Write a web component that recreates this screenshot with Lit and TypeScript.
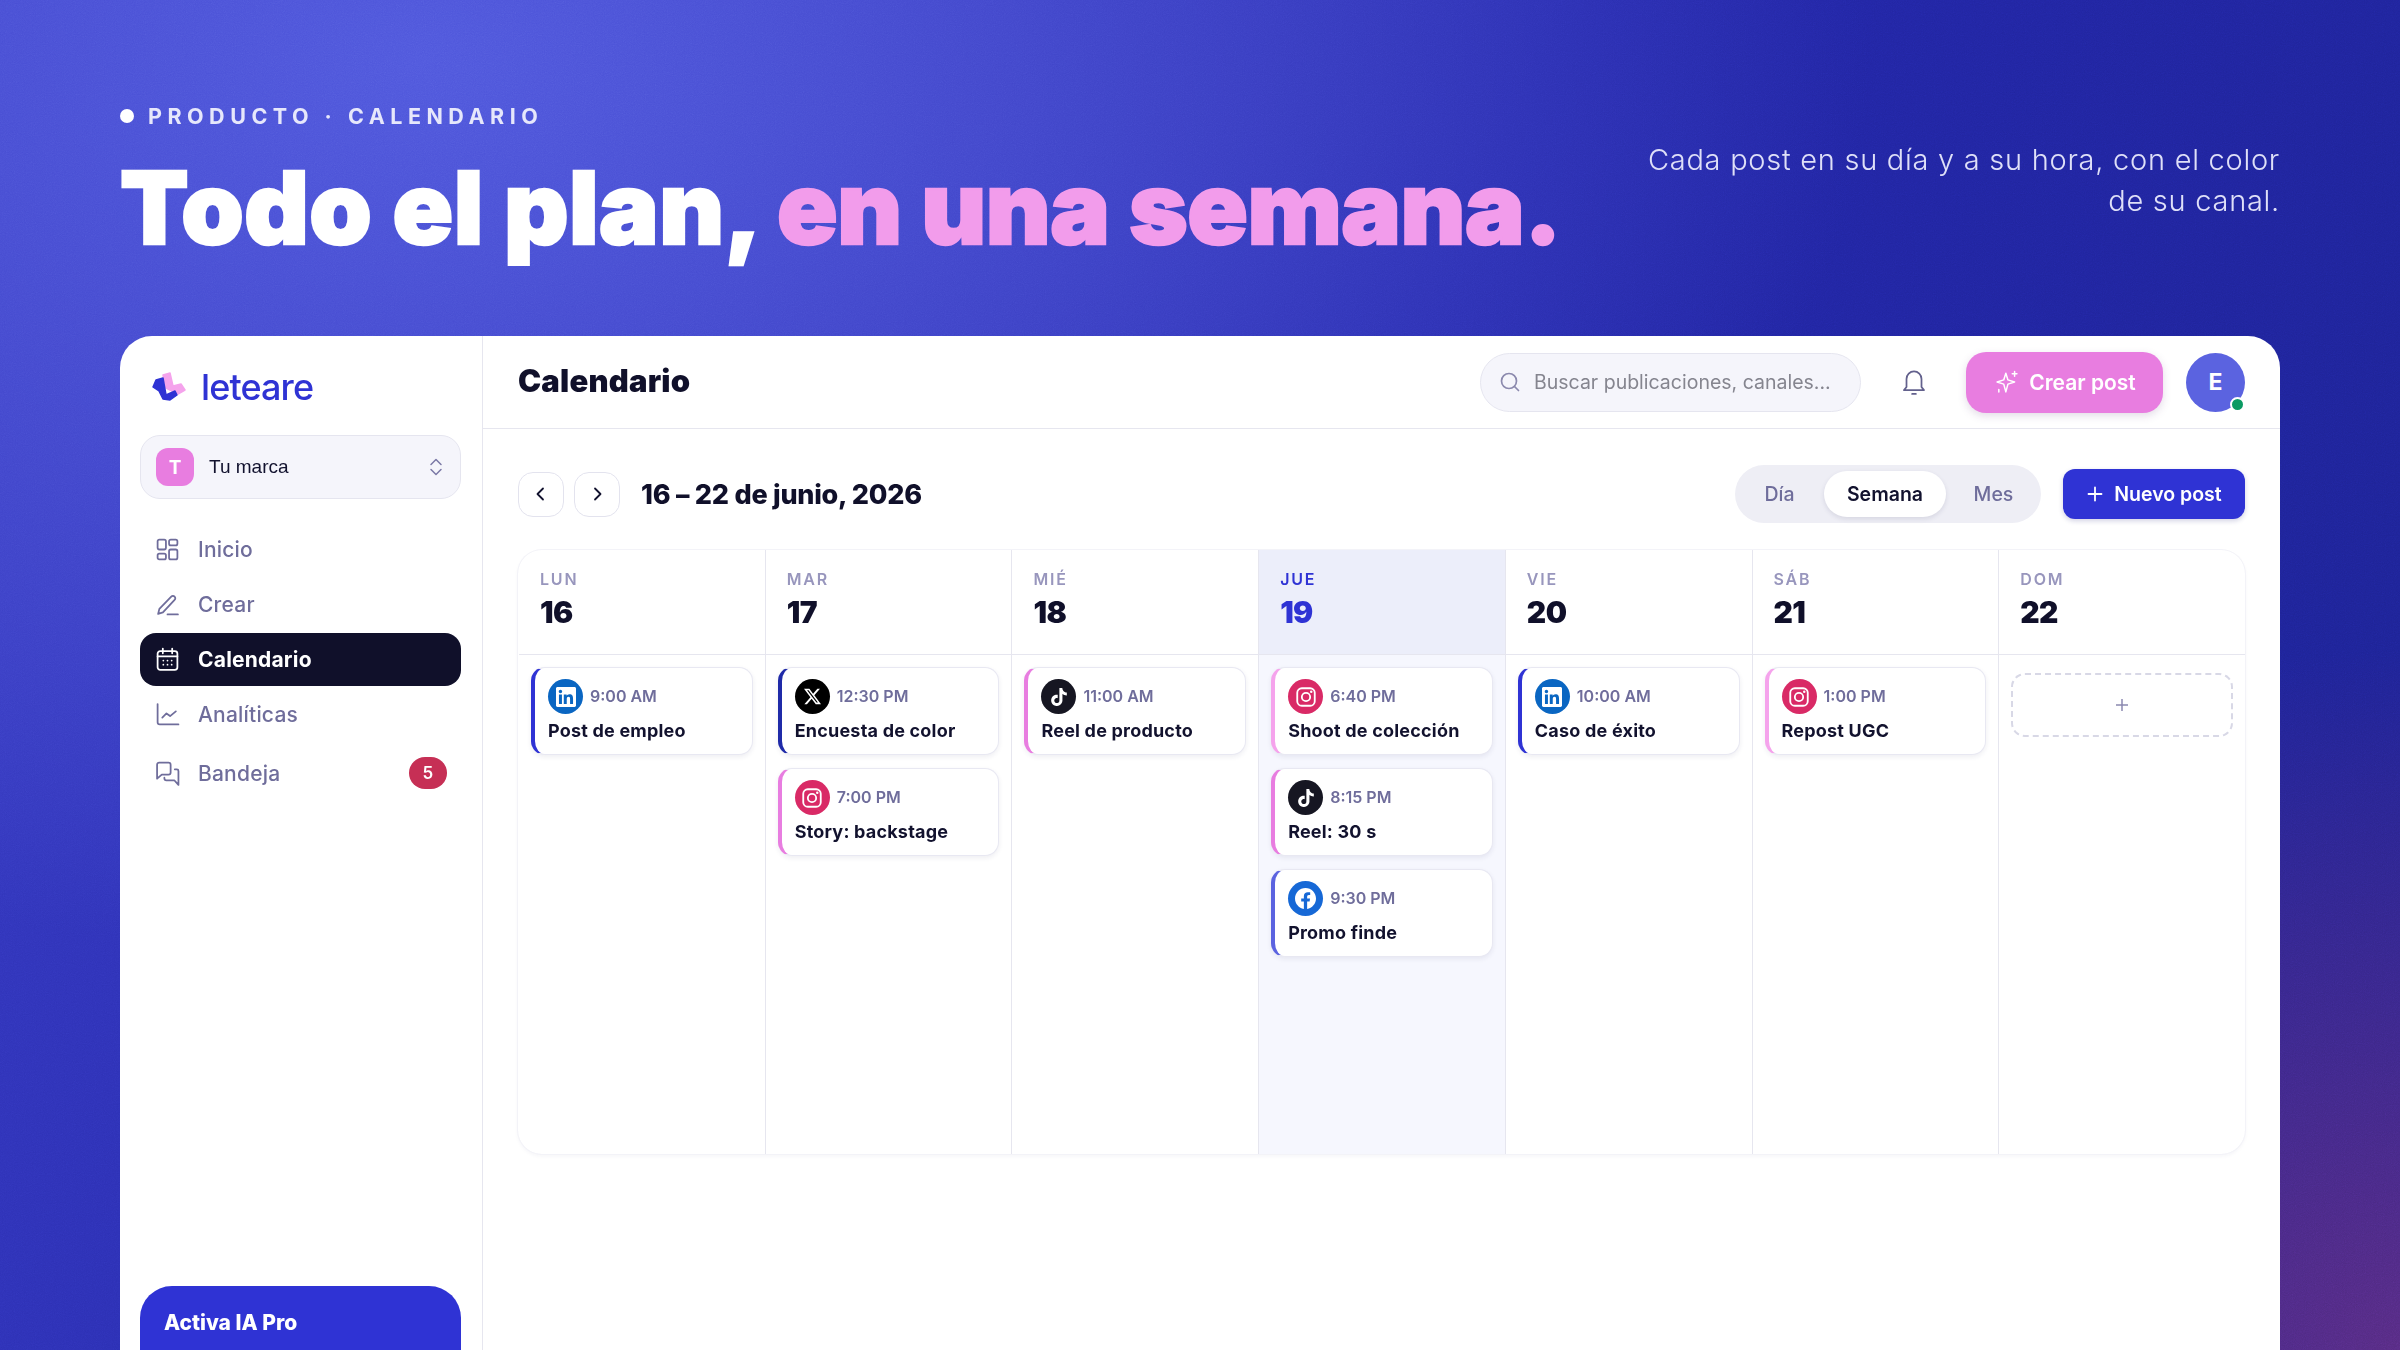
import { LitElement, html, css, svg } from "lit";
import { customElement } from "lit/decorators.js";

const icon = (body: unknown, size = 25) => html`<svg class="ic" width=${size} height=${size} viewBox="0 0 24 24" fill="none" stroke="currentColor" stroke-width="1.700" stroke-linecap="round" stroke-linejoin="round">${body}</svg>`;

const navIcons: Record<string, unknown> = {
  home: svg`<rect x="2.500" y="2.500" width="8" height="9.500" rx="1.600"/><rect x="13.500" y="2.500" width="8" height="5.500" rx="1.600"/><rect x="2.500" y="16" width="8" height="5.500" rx="1.600"/><rect x="13.500" y="12" width="8" height="9.500" rx="1.600"/>`,
  pen: svg`<path d="M3 21l1.200-4.800L15.600 4.400a2.200 2.200 0 0 1 3.200 0 2.200 2.200 0 0 1 0 3.200L7.600 19.600 3 21z"/><path d="M12 21.500h10"/>`,
  cal: svg`<rect x="2.500" y="4" width="19" height="18" rx="2.500"/><path d="M2.500 9h19M7.500 1.500v4.500M16.500 1.500v4.500"/><path d="M8 13h.01M12 13h.01M16 13h.01M8 17h.01M12 17h.01M16 17h.01"/>`,
  chart: svg`<path d="M2.500 2v17.500a2 2 0 0 0 2 2h18"/><path d="M7 15l4-4 3.500 2.500L20 9"/>`,
  chat: svg`<path d="M2 3.500A2 2 0 0 1 4 1.500h9a2 2 0 0 1 2 2V11a2 2 0 0 1-2 2H6.500L2 17V3.500z"/><path d="M19 8h2a1.500 1.500 0 0 1 1.500 1.500V23l-4-4.500H11a2 2 0 0 1-2-2V16"/>`,
};

type Net = "in" | "x" | "ig" | "tt" | "fb";
const netBg: Record<Net, string> = { in: "#0a66c2", x: "#000000", ig: "#d92a66", tt: "#161622", fb: "#1668d6" };

const netGlyph = (n: Net) => {
  if (n === "in") return svg`<path fill="#fff" d="M20.447 20.452h-3.554v-5.569c0-1.328-.027-3.037-1.852-3.037-1.853 0-2.136 1.445-2.136 2.939v5.667H9.351V9h3.414v1.561h.046c.477-.9 1.637-1.850 3.370-1.850 3.601 0 4.267 2.370 4.267 5.455v6.286zM5.337 7.433c-1.144 0-2.063-.926-2.063-2.065 0-1.138.92-2.063 2.063-2.063 1.140 0 2.064.925 2.064 2.063 0 1.139-.925 2.065-2.064 2.065zm1.782 13.019H3.555V9h3.564v11.452zM22.225 0H1.771C.792 0 0 .774 0 1.729v20.542C0 23.227.792 24 1.771 24h20.451C23.2 24 24 23.227 24 22.271V1.729C24 .774 23.2 0 22.222 0h.003z"/>`;
  if (n === "x") return svg`<path fill="#fff" d="M18.901 1.153h3.680l-8.040 9.190L24 22.846h-7.406l-5.800-7.584-6.638 7.584H.474l8.600-9.830L0 1.154h7.594l5.243 6.932ZM17.610 20.644h2.039L6.486 3.240H4.298Z"/>`;
  if (n === "tt") return svg`<path fill="#fff" d="M12.525.02c1.310-.02 2.610-.01 3.910-.02.08 1.530.63 3.090 1.750 4.170 1.120 1.110 2.700 1.620 4.240 1.790v4.030c-1.440-.05-2.890-.35-4.200-.97-.57-.26-1.100-.59-1.620-.93-.01 2.920.01 5.840-.02 8.750-.08 1.400-.54 2.790-1.350 3.940-1.310 1.920-3.580 3.170-5.910 3.210-1.430.08-2.860-.31-4.080-1.030-2.020-1.190-3.440-3.370-3.650-5.710-.02-.5-.03-1-.01-1.490.18-1.900 1.120-3.720 2.580-4.960 1.660-1.440 3.980-2.130 6.150-1.720.02 1.480-.04 2.960-.04 4.440-.99-.32-2.150-.23-3.020.37-.63.41-1.110 1.040-1.360 1.750-.21.51-.15 1.070-.14 1.610.24 1.640 1.820 3.020 3.500 2.870 1.120-.01 2.190-.66 2.770-1.610.19-.33.4-.67.41-1.060.1-1.790.06-3.570.07-5.360.01-4.030-.01-8.050.02-12.070z"/>`;
  if (n === "fb") return svg`<path fill="#fff" d="M24 12.073c0-6.627-5.373-12-12-12s-12 5.373-12 12c0 5.990 4.388 10.954 10.125 11.854v-8.385H7.078v-3.470h3.047V9.430c0-3.007 1.792-4.669 4.533-4.669 1.312 0 2.686.235 2.686.235v2.953H15.830c-1.491 0-1.956.925-1.956 1.874v2.250h3.328l-.532 3.470h-2.796v8.385C19.612 23.027 24 18.062 24 12.073z"/>`;
  return svg`<rect x="1.500" y="1.500" width="21" height="21" rx="5.500" fill="none" stroke="#fff" stroke-width="2.200"/><circle cx="12" cy="12" r="5" fill="none" stroke="#fff" stroke-width="2.200"/><circle cx="18.300" cy="5.700" r="1.500" fill="#fff"/>`;
};

const netSize: Record<Net, number> = { in: 20, x: 17, ig: 20, tt: 18, fb: 21 };

interface Post { net: Net; time: string; title: string; bar: string; }
interface Day { dow: string; num: number; today?: boolean; posts: Post[]; empty?: boolean; }

const BLUE = "#2f33d4", NAVY = "#1f2aa8", PINK = "#e87de0", PALE = "#f5a3ec", PERI = "#5b63e0";

const days: Day[] = [
  { dow: "LUN", num: 16, posts: [{ net: "in", time: "9:00 AM", title: "Post de empleo", bar: BLUE }] },
  { dow: "MAR", num: 17, posts: [
    { net: "x", time: "12:30 PM", title: "Encuesta de color", bar: NAVY },
    { net: "ig", time: "7:00 PM", title: "Story: backstage", bar: PINK },
  ] },
  { dow: "MIÉ", num: 18, posts: [{ net: "tt", time: "11:00 AM", title: "Reel de producto", bar: PINK }] },
  { dow: "JUE", num: 19, today: true, posts: [
    { net: "ig", time: "6:40 PM", title: "Shoot de colección", bar: PALE },
    { net: "tt", time: "8:15 PM", title: "Reel: 30 s", bar: PINK },
    { net: "fb", time: "9:30 PM", title: "Promo finde", bar: PERI },
  ] },
  { dow: "VIE", num: 20, posts: [{ net: "in", time: "10:00 AM", title: "Caso de éxito", bar: BLUE }] },
  { dow: "SÁB", num: 21, posts: [{ net: "ig", time: "1:00 PM", title: "Repost UGC", bar: PALE }] },
  { dow: "DOM", num: 22, posts: [], empty: true },
];

@customElement("app-root")
export class AppRoot extends LitElement {
  static styles = css`
    :host { display: block; width: 2400px; height: 1350px; overflow: hidden; position: relative; font-family: Inter, "Liberation Sans", sans-serif; color: #12122e;
      background:
        radial-gradient(850px 700px at 2400px 1350px, rgba(115,48,125,.68), rgba(115,48,125,0) 100%),
        radial-gradient(1450px 900px at 420px 60px, #5058dd 0%, rgba(76,82,214,.72) 40%, rgba(50,55,190,0) 100%),
        linear-gradient(120deg, #383cc4 0%, #2326a8 50%, #1c2290 100%);
    }
    .noise { position: absolute; inset: 0; width: 100%; height: 100%; opacity: .22; mix-blend-mode: overlay; pointer-events: none; }
    .page { position: relative; display: flex; flex-direction: column; padding: 0 120px; height: 1350px; box-sizing: border-box; }
    .hero { display: flex; justify-content: space-between; align-items: flex-start; height: 336px; flex: none; box-sizing: border-box; padding-top: 101px; }
    .eyebrow { display: flex; align-items: center; gap: 14px; color: #e6e7fb; font-size: 21.500px; font-weight: 700; letter-spacing: 5.500px; line-height: 30px; white-space: nowrap; }
    .eyebrow i { width: 14px; height: 14px; border-radius: 50%; background: #fff; }
    h1 { margin: 22px 0 0; font-size: 100px; line-height: 110px; font-weight: 900; letter-spacing: .45px; color: #fff; white-space: nowrap; -webkit-text-stroke: 2.500px currentColor; }
    h1 span { color: #f29ceb; letter-spacing: -.45px; }
    .lede { margin: 38px 0 0; width: 640px; text-align: right; color: #dfe0f8; font-size: 29px; line-height: 41px; font-weight: 300; letter-spacing: .73px; flex: none; }
    .app { flex: 1; display: flex; background: #fff; border-radius: 32px 32px 0 0; overflow: hidden; min-height: 0; }
    .side { width: 363px; flex: none; box-sizing: border-box; border-right: 1px solid #e6e6ef; padding: 0 21px 0 20px; display: flex; flex-direction: column; }
    .logo { display: flex; align-items: center; gap: 15px; height: 99px; box-sizing: border-box; padding: 2px 0 0 12px; font-size: 36px; font-weight: 500; color: #2f33d4; letter-spacing: -.9px; }
    .logo svg { flex: none; }
    .brand { height: 64px; flex: none; box-sizing: border-box; display: flex; align-items: center; padding: 0 17px 0 15px; background: #f5f5fb; border: 1px solid #e5e5ef; border-radius: 20px; font-family: "Liberation Sans", sans-serif; font-size: 19px; }
    .brand b { width: 38px; height: 38px; border-radius: 12px; background: #e87de0; color: #fff; display: grid; place-items: center; font: 700 19px Inter, sans-serif; margin-right: 15px; }
    .brand span { flex: 1; }
    .brand svg { color: #7b79a6; }
    nav { display: flex; flex-direction: column; gap: 2px; margin-top: 24px; }
    .item { display: flex; align-items: center; gap: 18px; height: 53px; padding: 0 14px 0 15px; border-radius: 16px; color: #6f6d9b; font-size: 21px; font-weight: 500; letter-spacing: .2px; }
    .item.on { background: #10102a; color: #fff; font-weight: 700; }
    .item.tall { height: 60px; }
    .item em { margin-left: auto; width: 38px; height: 32px; border-radius: 16px; background: #c62f55; color: #fff; font-style: normal; font-size: 17px; font-weight: 600; display: grid; place-items: center; }
    .promo { margin-top: auto; height: 64px; flex: none; background: #2f33d4; border-radius: 32px 32px 0 0; color: #fff; box-sizing: border-box; padding: 23px 24px 0; overflow: hidden; }
    .promo h4 { margin: 0; font-size: 21px; line-height: 28px; font-weight: 800; }
    .promo p { margin: 12px 0 0; font-size: 16px; line-height: 22px; color: #d9dbfa; white-space: nowrap; }
    .main { flex: 1; min-width: 0; display: flex; flex-direction: column; }
    .top { height: 93px; flex: none; box-sizing: border-box; border-bottom: 1px solid #e6e6ef; display: flex; align-items: center; padding: 0 35px; }
    .top h2 { margin: -3px 0 0; font-size: 31px; font-weight: 900; letter-spacing: .2px; flex: 1; color: #10102a; }
    .search { width: 381px; height: 59px; box-sizing: border-box; border: 1px solid #e5e5ef; background: #f5f5fb; border-radius: 30px; display: flex; align-items: center; gap: 13px; padding: 0 18px; color: #8b89ad; font-size: 19.500px; }
    .search span { color: #85858f; white-space: nowrap; font-weight: 400; }
    .bell { margin: 0 37px 0 38px; color: #63618d; display: flex; }
    .create { width: 197px; height: 61px; border-radius: 20px; background: #e87de0; color: #fff; font-size: 21px; font-weight: 600; display: flex; align-items: center; justify-content: center; gap: 8px; box-shadow: 0 3px 8px rgba(100,60,120,.18); }
    .avatar { margin-left: 23px; width: 59px; height: 59px; border-radius: 50%; background: #5b63e0; color: #fff; font-weight: 700; font-size: 23px; display: grid; place-items: center; position: relative; }
    .avatar u { position: absolute; right: 0; bottom: 0; width: 11px; height: 11px; border-radius: 50%; background: #0b9a63; border: 2px solid #fff; }
    .content { padding: 0 35px; flex: 1; }
    .bar { height: 121px; display: flex; align-items: center; box-sizing: border-box; padding-top: 9px; }
    .arrow { width: 46px; height: 45px; box-sizing: border-box; border: 1px solid #e3e3ee; border-radius: 15px; display: grid; place-items: center; margin-right: 10px; color: #12122e; }
    .date { font-size: 27px; font-weight: 800; letter-spacing: -.25px; margin-left: 11px; flex: 1; color: #10102a; }
    .seg { width: 306px; height: 58px; box-sizing: border-box; background: #eeeef5; border-radius: 29px; display: flex; align-items: center; font-size: 19.500px; font-weight: 500; color: #6f6d9b; }
    .seg span { flex: 1 1 0; text-align: center; }
    .seg span:first-child { flex: 0 0 89px; }
    .seg .on { flex: none; width: 122px; height: 46px; line-height: 46px; border-radius: 23px; background: #fff; color: #12122e; font-weight: 600; box-shadow: 0 2px 5px rgba(40,40,90,.12); }
    .new { margin-left: 22px; width: 182px; height: 50px; border-radius: 12px; background: #2f33d4; color: #fff; font-size: 19.500px; font-weight: 600; display: flex; align-items: center; justify-content: center; gap: 10px; box-shadow: 0 2px 5px rgba(30,30,120,.2); }
    .cal { height: 604px; border-radius: 24px; display: grid; grid-template-columns: repeat(7, 1fr); box-shadow: 0 0 0 1px #f3f3f8, 0 2px 4px rgba(40,40,90,.05); overflow: hidden; }
    .col { border-left: 1px solid #e6e6ef; display: flex; flex-direction: column; min-width: 0; }
    .col:first-child { border-left-color: transparent; }
    .col.today { background: #f6f7fe; }
    .head { height: 105px; flex: none; box-sizing: border-box; border-bottom: 1px solid #e6e6ef; padding: 18px 0 0 21px; }
    .col.today .head { background: #eceefa; }
    .dow { font-size: 16px; line-height: 22px; font-weight: 600; letter-spacing: 1.800px; color: #9896bd; }
    .num { font-size: 30px; line-height: 44px; font-weight: 900; letter-spacing: -.6px; color: #10102a; }
    .today .dow, .today .num { color: #2f33d4; }
    .list { padding: 12px 12px; display: flex; flex-direction: column; gap: 13px; }
    .post { height: 88px; box-sizing: border-box; background: #fff; border: 1px solid #e8e8f2; border-left: 4px solid; border-radius: 14px; padding: 11px 12px 0 13px; box-shadow: 0 2px 5px rgba(40,40,90,.08); }
    .meta { display: flex; align-items: center; gap: 7px; height: 35px; font-size: 16px; font-weight: 600; color: #6f6d9b; }
    .badge { width: 35px; height: 35px; border-radius: 50%; display: grid; place-items: center; flex: none; }
    .meta span { margin-top: -2px; }
    .title { font-size: 18px; font-weight: 700; line-height: 24px; margin-top: 5px; color: #12122e; white-space: nowrap; letter-spacing: .2px; }
    .add { height: 64px; box-sizing: border-box; margin: 6px 0 0 0; border: 2px dashed #d8d8e6; border-radius: 14px; display: grid; place-items: center; color: #8b89b0; }
  `;

  render() {
    return html`
      <svg class="noise" aria-hidden="true"><filter id="n"><feTurbulence type="fractalNoise" baseFrequency="0.9" numOctaves="2" stitchTiles="stitch"/><feColorMatrix type="saturate" values="0"/></filter><rect width="100%" height="100%" filter="url(#n)"/></svg>
      <div class="page">
        <header class="hero">
          <div>
            <div class="eyebrow"><i></i>PRODUCTO · CALENDARIO</div>
            <h1>Todo el plan, <span>en una semana.</span></h1>
          </div>
          <p class="lede">Cada post en su día y a su hora, con el color de su canal.</p>
        </header>
        <section class="app">
          <aside class="side">
            <div class="logo">
              <svg width="34" height="29" viewBox="7 9 34 29"><path fill="#f5a3ec" stroke="#f5a3ec" stroke-width="1.500" stroke-linejoin="round" d="M18 12L25 10L28 23L36 21L40 27L33 31L21 25Z"/><path fill="#2f33d4" stroke="#2f33d4" stroke-width="1.500" stroke-linejoin="round" d="M11 17L18 15L21 32L30 28L32 32L25 37L18 36L14 28L8 24Z"/></svg>
              leteare
            </div>
            <div class="brand"><b>T</b><span>Tu marca</span>
              <svg width="14" height="18" viewBox="0 0 14 18" fill="none" stroke="currentColor" stroke-width="1.500" stroke-linecap="round" stroke-linejoin="round"><path d="M2 6.500l5-5 5 5M2 11.500l5 5 5-5"/></svg>
            </div>
            <nav>
              <div class="item">${icon(navIcons.home)}Inicio</div>
              <div class="item">${icon(navIcons.pen)}Crear</div>
              <div class="item on">${icon(navIcons.cal)}Calendario</div>
              <div class="item">${icon(navIcons.chart)}Analíticas</div>
              <div class="item tall">${icon(navIcons.chat)}Bandeja<em>5</em></div>
            </nav>
            <div class="promo"><h4>Activa IA Pro</h4><p>Posts y análisis ilimitados</p></div>
          </aside>
          <div class="main">
            <div class="top">
              <h2>Calendario</h2>
              <div class="search">
                <svg width="22" height="22" viewBox="0 0 22 22" fill="none" stroke="currentColor" stroke-width="1.700" stroke-linecap="round"><circle cx="10" cy="10" r="7.500"/><path d="M15.500 15.500l4 4"/></svg>
                <span>Buscar publicaciones, canales...</span>
              </div>
              <div class="bell">
                <svg width="30" height="30" viewBox="0 0 24 24" fill="none" stroke="currentColor" stroke-width="1.400" stroke-linecap="round" stroke-linejoin="round"><path d="M6 16V9.500a6 6 0 0 1 12 0V16l2 2.500H4L6 16z"/><path d="M10.500 21.500h3"/></svg>
              </div>
              <div class="create">
                <svg width="28" height="28" viewBox="0 0 24 24" fill="none" stroke="currentColor" stroke-width="1.300" stroke-linejoin="round" stroke-linecap="round"><path d="M11 4.500l1.800 5.700L18.500 12l-5.700 1.800L11 20.500l-1.800-6.700L3.500 12l5.700-1.800z"/><path d="M18.500 3v4M16.500 5h4M5 18.500v2"/></svg>
                Crear post
              </div>
              <div class="avatar">E<u></u></div>
            </div>
            <div class="content">
              <div class="bar">
                <div class="arrow"><svg width="18" height="18" viewBox="0 0 18 18" fill="none" stroke="currentColor" stroke-width="1.800" stroke-linecap="round" stroke-linejoin="round"><path d="M11 3.500L5.500 9l5.500 5.500"/></svg></div>
                <div class="arrow"><svg width="18" height="18" viewBox="0 0 18 18" fill="none" stroke="currentColor" stroke-width="1.800" stroke-linecap="round" stroke-linejoin="round"><path d="M7 3.500L12.500 9 7 14.500"/></svg></div>
                <div class="date">16 – 22 de junio, 2026</div>
                <div class="seg"><span>Día</span><span class="on">Semana</span><span>Mes</span></div>
                <div class="new">
                  <svg width="18" height="18" viewBox="0 0 18 18" fill="none" stroke="currentColor" stroke-width="1.800" stroke-linecap="round"><path d="M9 2.500v13M2.500 9h13"/></svg>
                  Nuevo post
                </div>
              </div>
              <div class="cal">
                ${days.map((d) => html`
                  <div class="col ${d.today ? "today" : ""}">
                    <div class="head"><div class="dow">${d.dow}</div><div class="num">${d.num}</div></div>
                    <div class="list">
                      ${d.posts.map((p) => html`
                        <div class="post" style="border-left-color:${p.bar}">
                          <div class="meta">
                            <div class="badge" style="background:${netBg[p.net]}"><svg width=${netSize[p.net]} height=${netSize[p.net]} viewBox="0 0 24 24">${netGlyph(p.net)}</svg></div>
                            <span>${p.time}</span>
                          </div>
                          <div class="title">${p.title}</div>
                        </div>`)}
                      ${d.empty ? html`<div class="add"><svg width="16" height="16" viewBox="0 0 16 16" fill="none" stroke="currentColor" stroke-width="1.500"><path d="M8 2v12M2 8h12"/></svg></div>` : ""}
                    </div>
                  </div>`)}
              </div>
            </div>
          </div>
        </section>
      </div>
    `;
  }
}
